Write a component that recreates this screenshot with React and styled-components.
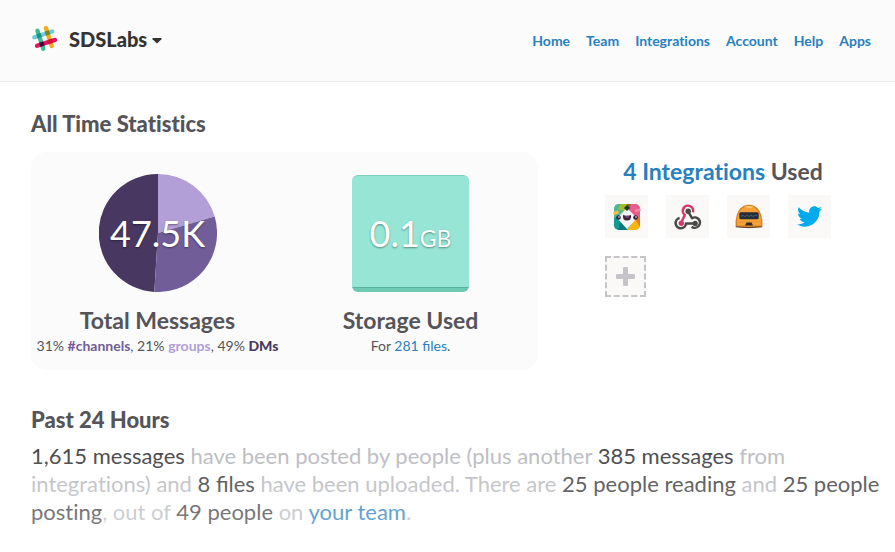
import React from 'react';
import styled, { createGlobalStyle } from 'styled-components';
import { FaTwitter } from 'react-icons/fa';

const GlobalStyle = createGlobalStyle`
  * {
    box-sizing: border-box;
  }

  body {
    margin: 0;
    background-color: #fff;
    color: #555459;
    font-family: Lato, 'Liberation Sans', sans-serif;
    font-size: 14px;
    font-variant-ligatures: none;
    line-height: 20px;
  }

  a {
    color: #2780c0;
    text-decoration: none;
  }
`;

const Header = styled.header`
  display: flex;
  align-items: center;
  justify-content: space-between;
  padding: 20px 24px 22px 31px;
  background-color: #fbfbfb;
  border-bottom: 1px solid #ebebeb;
`;

const TeamMenu = styled.button`
  display: flex;
  align-items: center;
  padding: 0;
  border: none;
  background-color: transparent;
  color: #333;
  font-family: inherit;
  font-size: 20px;
  font-weight: 900;
  line-height: 39px;
  cursor: pointer;

  .logo {
    margin-right: 11px;
    margin-bottom: 2px;
  }

  .caret {
    margin-top: 3px;
    margin-left: 5px;
  }
`;

const Nav = styled.nav`
  display: flex;
  gap: 16px;
  padding-top: 2px;

  a {
    font-weight: 700;
  }
`;

const Main = styled.main`
  padding: 28px 12px 24px 31px;
`;

const Heading = styled.h2`
  margin: 0;
  font-size: 22px;
  font-weight: 900;
  line-height: 28px;
`;

const Stats = styled.section`
  display: grid;
  grid-template-columns: 507fr 236fr;
  gap: 67px;
  align-items: start;
  margin: 14px 0 36px;
  padding-right: 42px;
`;

const Panel = styled.div`
  display: grid;
  grid-template-columns: 1fr 1fr;
  padding: 22px 1px 13px 0;
  border-radius: 16px;
  background-color: #fbfbfb;
`;

const Stat = styled.div`
  display: flex;
  flex-direction: column;
  align-items: center;
  text-align: center;
  white-space: nowrap;
`;

const StatTitle = styled.h3`
  margin: 0 0 2px;
  color: #555459;
  font-size: 23px;
  font-weight: 700;
  line-height: 26px;
`;

const StatText = styled.p`
  margin: 0;
  font-variant-ligatures: normal;
  line-height: 22px;
`;

const Kind = styled.strong`
  color: ${props => props.color};
  font-weight: ${props => props.weight || 700};
`;

const Figure = styled.div`
  display: grid;
  place-items: center;
  width: 118px;
  height: 118px;
  margin-bottom: 15px;

  > * {
    grid-area: 1 / 1;
  }
`;

const StorageBox = styled.div`
  width: 117px;
  height: 117px;
  border-top: 1px solid #7fd0bd;
  border-radius: 6px;
  background: linear-gradient(
    to top,
    #6fcab3 4px,
    #5ab39d 4px,
    #5ab39d 5px,
    #97e5d4 5px
  );
`;

const Amount = styled.span`
  z-index: 1;
  color: #fff;
  font-size: 36px;
  line-height: 40px;
  text-shadow: 0 1px 2px rgba(0, 0, 0, 0.4);

  small {
    font-size: 23px;
    line-height: 20px;
  }
`;

const Integrations = styled.div`
  padding-top: 6px;

  ${StatTitle} {
    text-align: center;
    white-space: nowrap;
  }
`;

const Tiles = styled.div`
  display: flex;
  flex-wrap: wrap;
  gap: 18px;
  margin-top: 11px;
`;

const Tile = styled.a`
  display: flex;
  align-items: center;
  justify-content: center;
  width: 43px;
  height: 43px;
  background-color: #faf9f8;
`;

const AddTile = styled(Tile)`
  width: 41px;
  height: 41px;
  border: 2px dashed #c5c5c9;
`;

const Summary = styled.p`
  position: relative;
  margin: 8px 0 0;
  color: #babbbf;
  font-size: 22px;
  line-height: 28px;

  strong {
    color: #444447;
    font-weight: 400;
  }

  .files {
    font-variant-ligatures: normal;
  }

  /* the text fades out towards the bottom of the page */
  &::after {
    content: '';
    position: absolute;
    inset: 0;
    background: linear-gradient(
      rgba(255, 255, 255, 0),
      rgba(255, 255, 255, 0.32)
    );
    pointer-events: none;
  }
`;

const links = ['Home', 'Team', 'Integrations', 'Account', 'Help', 'Apps'];

const Logo = () => (
  <svg className="logo" width="27" height="27" viewBox="0 0 27 27">
    <g transform="translate(13.6 13.4) rotate(-18)">
      <rect x="-11.6" y="-6.4" width="23.2" height="4.3" rx="2.15" fill="#70cadb" />
      <rect x="2.3" y="-11.6" width="4.3" height="23.2" rx="2.15" fill="#f2ab20" />
      <rect x="-6.6" y="-11.6" width="4.3" height="23.2" rx="2.15" fill="#3eb890" />
      <rect x="-11.6" y="2.5" width="23.2" height="4.3" rx="2.15" fill="#e8105f" />
      <rect x="-6.6" y="-6.4" width="4.3" height="4.3" fill="#1a937d" />
      <rect x="2.3" y="-6.4" width="4.3" height="4.3" fill="#778722" />
      <rect x="-6.6" y="2.5" width="4.3" height="4.3" fill="#2c1538" />
      <rect x="2.3" y="2.5" width="4.3" height="4.3" fill="#cc1a27" />
    </g>
  </svg>
);

const Caret = () => (
  <svg className="caret" width="10" height="6" viewBox="0 0 10 6">
    <path d="M1 0h8q1 .5.4 1.2L5.6 5q-.6.5-1.2 0L.6 1.2Q0 .5 1 0z" fill="#333" />
  </svg>
);

const Pie = () => (
  <svg width="118" height="118" viewBox="-59 -59 118 118">
    <path d="M0 0L-3.7 58.9A59 59 0 0 1 0-59z" fill="#483861" />
    <path d="M0 0L0-59A59 59 0 0 1 56.7-16.4z" fill="#b29fd8" />
    <path d="M0 0L56.7-16.4A59 59 0 0 1-3.7 58.9z" fill="#715d98" />
  </svg>
);

const PuppetIcon = () => (
  <svg width="28" height="28" viewBox="0 0 28 28">
    <defs>
      <clipPath id="puppet">
        <rect x="1" y="1" width="26" height="26" rx="5" />
      </clipPath>
    </defs>
    <g clipPath="url(#puppet)">
      <rect width="28" height="28" fill="#59b894" />
      <path d="M0 0h14v8L5 15 0 12z" fill="#52b793" />
      <path d="M8 0h6v9L5 6z" fill="#a3bb2d" />
      <path d="M14 0h8l-3 5-5 2z" fill="#8c6b20" />
      <path d="M18 0h10v15l-5 1-7-9z" fill="#e85b8c" />
      <path d="M0 14l5 1 9 12H0z" fill="#149b91" />
      <path d="M7 19l7 3v6H5z" fill="#087a7c" />
      <path d="M14 28l7-11 7 2v9z" fill="#fdb510" />
      <path d="M22 16l6-3v12z" fill="#ed771d" />
      <path d="M14 5l10 10-10 11L4 15z" fill="#f5f5f8" />
      <path d="M14 2l3 3-3 3-3-3z" fill="#25342b" />
    </g>
    <path d="M10 12q4 1.5 8 0 .8 5.5-4 5.5t-4-5.5z" fill="#41213e" />
    <path d="M12 13.2h4v1.3h-4z" fill="#7f587d" />
    <circle cx="5.5" cy="14.5" r="2.3" fill="#36203c" />
    <circle cx="22.5" cy="14.5" r="2.3" fill="#36203c" />
    <circle cx="6" cy="14" r=".8" fill="#fff" />
    <circle cx="23" cy="14" r=".8" fill="#fff" />
    <path d="M.5 10.5L5.5 9" stroke="#f6bb45" strokeWidth="3" />
    <path d="M22 8l5.5-1.5" stroke="#f385a9" strokeWidth="2.6" />
  </svg>
);

const WebhookIcon = () => (
  <svg
    width="28"
    height="28"
    viewBox="0 0 28 28"
    fill="none"
    strokeWidth="2.5"
    strokeLinejoin="round"
  >
    <path d="M19 9.3A5.2 5.2 0 1 0 10.8 12L7.8 18.5" stroke="#d6386b" />
    <path d="M14.2 8.7L18 15.2A5.2 5.2 0 1 1 17.6 23.8" stroke="#484848" />
    <path d="M5.6 15A5.2 5.2 0 1 0 12 20.5H20.8" stroke="#484848" />
    <circle cx="14.2" cy="8.3" r="2.7" fill="#484848" />
    <circle cx="7.3" cy="20.2" r="2.7" fill="#d6386b" />
    <circle cx="21.2" cy="20.4" r="2.6" fill="#484848" />
  </svg>
);

const RobotIcon = () => (
  <svg width="28" height="28" viewBox="0 0 28 28">
    <path
      d="M.6 18Q1.5 9.5 5.5 5.2 9 1.8 14 1.8t8.5 3.4Q26.5 9.5 27.4 18v5.6Q21 25 14 25T.6 23.6z"
      fill="#d4811f"
    />
    <path
      d="M2 16Q3 9.5 6.5 6.2 9.5 3.2 14 3.2t7.5 3Q25 9.5 26 16v6.5H2z"
      fill="#f6a13a"
    />
    <path d="M9 3.8Q14 2 19 3.8 14 5.5 9 3.8z" fill="#ffd38a" />
    <rect x="4.3" y="9.3" width="19.4" height="7" rx="1.5" fill="#252e37" />
    <path
      d="M6 13.2l2-.8 2 1.2 2-1.6 2 1.6 2-1.6 2 1.6 2-1.6 2 .8"
      fill="none"
      stroke="#4d6b78"
      strokeWidth=".8"
    />
    <path d="M2 19h24" stroke="#e5932f" />
    <path d="M11.5 19.5h5l1.5 3h-8z" fill="#2e2a26" />
    <path d="M.8 23.8q13.2 1.8 26.4 0" stroke="#5c402e" fill="none" />
  </svg>
);

const PlusIcon = () => (
  <svg width="19" height="19" viewBox="0 0 19 19" fill="#c5c5c9">
    <rect x="7" width="5" height="19" rx="1.2" />
    <rect y="7" width="19" height="5" rx="1.2" />
  </svg>
);

const App = () => {
  return (
    <>
      <GlobalStyle />
      <Header>
        <TeamMenu type="button">
          <Logo />
          SDSLabs
          <Caret />
        </TeamMenu>
        <Nav>
          {links.map(link => (
            <a key={link} href={`#${link.toLowerCase()}`}>
              {link}
            </a>
          ))}
        </Nav>
      </Header>
      <Main>
        <Heading>All Time Statistics</Heading>
        <Stats>
          <Panel>
            <Stat>
              <Figure>
                <Pie />
                <Amount>47.5K</Amount>
              </Figure>
              <StatTitle>Total Messages</StatTitle>
              <StatText>
                31% <Kind color="#715d98">#channels</Kind>, 21%{' '}
                <Kind color="#b29fd8">groups</Kind>, 49%{' '}
                <Kind color="#483861" weight={900}>
                  DMs
                </Kind>
              </StatText>
            </Stat>
            <Stat>
              <Figure>
                <StorageBox />
                <Amount>
                  0.1<small>GB</small>
                </Amount>
              </Figure>
              <StatTitle>Storage Used</StatTitle>
              <StatText>
                For <a href="#files">281 files</a>.
              </StatText>
            </Stat>
          </Panel>
          <Integrations>
            <StatTitle>
              <a href="#integrations">4 Integrations</a> Used
            </StatTitle>
            <Tiles>
              <Tile href="#puppet">
                <PuppetIcon />
              </Tile>
              <Tile href="#webhooks">
                <WebhookIcon />
              </Tile>
              <Tile href="#hubot">
                <RobotIcon />
              </Tile>
              <Tile href="#twitter">
                <FaTwitter size="25" color="#00aaec" />
              </Tile>
              <AddTile href="#add">
                <PlusIcon />
              </AddTile>
            </Tiles>
          </Integrations>
        </Stats>
        <Heading>Past 24 Hours</Heading>
        <Summary>
          <strong>1,615 messages</strong> have been posted by people (plus
          another <strong>385 messages</strong> from integrations) and{' '}
          <strong className="files">8 files</strong> have been uploaded. There
          are <strong>25 people reading</strong> and{' '}
          <strong>25 people posting</strong>, out of <strong>49 people</strong>{' '}
          on <a href="#team">your team</a>.
        </Summary>
      </Main>
    </>
  );
};

export default App;
